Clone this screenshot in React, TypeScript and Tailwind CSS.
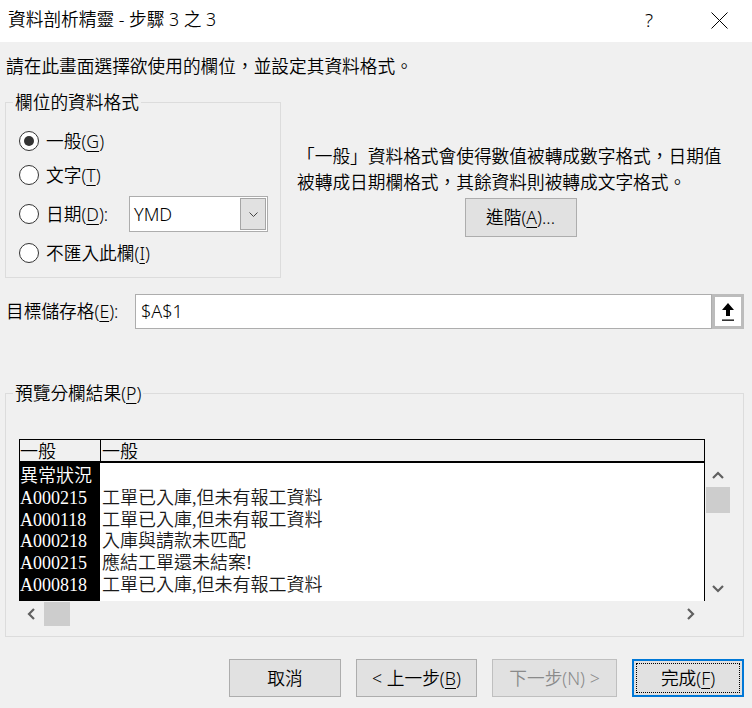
import React from 'react'

const rows: [string, string][] = [
  ['異常狀況', ''],
  ['A000215', '工單已入庫,但未有報工資料'],
  ['A000118', '工單已入庫,但未有報工資料'],
  ['A000218', '入庫與請款未匹配'],
  ['A000215', '應結工單還未結案!'],
  ['A000818', '工單已入庫,但未有報工資料'],
]

function Radio({ checked }: { checked?: boolean }) {
  return (
    <span className="flex h-[20px] w-[20px] shrink-0 items-center justify-center rounded-full border border-[#333] bg-white">
      {checked && <span className="h-[10px] w-[10px] rounded-full bg-[#333]" />}
    </span>
  )
}

function Key({ k }: { k: string }) {
  return <>(<span className="underline underline-offset-[3px]">{k}</span>)</>
}

function Chevron({ dir }: { dir: 'up' | 'down' | 'left' | 'right' }) {
  if (dir === 'up' || dir === 'down') {
    return (
      <svg width="12" height="8" viewBox="0 0 12 8">
        <polyline points={dir === 'up' ? '1,7 6,2 11,7' : '1,1 6,6 11,1'} fill="none" stroke="#606060" strokeWidth="2.2" />
      </svg>
    )
  }
  return (
    <svg width="8" height="12" viewBox="0 0 8 12">
      <polyline points={dir === 'left' ? '7,1 2,6 7,11' : '1,1 6,6 1,11'} fill="none" stroke="#606060" strokeWidth="2.2" />
    </svg>
  )
}

export default function App() {
  return (
    <div className="h-[708px] w-[752px] overflow-hidden bg-[#f0f0f0] font-['Noto_Sans','Noto_Sans_CJK_TC',sans-serif] text-[17.7px] font-[350] text-black">
      {/* 標題列 */}
      <div className="flex h-[42px] items-start bg-white">
        <div className="pl-[8px] pt-[8px] leading-[22px]">資料剖析精靈 - 步驟 3 之 3</div>
        <div className="ml-auto flex items-center pr-[24px] pt-[10px]">
          <span className="w-[14px] text-center text-[19px] font-light leading-[20px]">?</span>
          <svg className="ml-[55px]" width="17" height="17" viewBox="0 0 17 17">
            <line x1="0.5" y1="0.5" x2="16.5" y2="16.5" stroke="#000" strokeWidth="1" />
            <line x1="16.5" y1="0.5" x2="0.5" y2="16.5" stroke="#000" strokeWidth="1" />
          </svg>
        </div>
      </div>

      <div className="mt-[13px] pl-[6px] leading-[22px]">請在此畫面選擇欲使用的欄位，並設定其資料格式。</div>

      {/* 欄位的資料格式 */}
      <div className="mt-[14px] flex">
        <fieldset className="ml-[5px] w-[276px] border border-[#dcdcdc] pb-[7px] pl-[13px] pt-[11px]">
          <legend className="-ml-[6px] px-[2px] leading-[22px]">欄位的資料格式</legend>
          <div className="flex h-[34px] items-center gap-[7px]">
            <Radio checked />
            <span>一般<Key k="G" /></span>
          </div>
          <div className="flex h-[34px] items-center gap-[7px]">
            <Radio />
            <span>文字<Key k="T" /></span>
          </div>
          <div className="flex h-[44px] items-center gap-[7px]">
            <Radio />
            <span className="w-[76px]">日期<Key k="D" />:</span>
            <div className="flex h-[36px] w-[139px] items-center border border-[#adadad] bg-white pl-[4px]">
              <span className="text-[18px]">YMD</span>
              <span className="ml-auto mr-[1px] flex h-[32px] w-[26px] items-center justify-center border border-[#a5a5a5] bg-[#e1e1e1]">
                <svg width="9" height="5" viewBox="0 0 9 5">
                  <polyline points="0.5,0.5 4.5,4.5 8.5,0.5" fill="none" stroke="#444" strokeWidth="1" />
                </svg>
              </span>
            </div>
          </div>
          <div className="flex h-[34px] items-center gap-[7px]">
            <Radio />
            <span>不匯入此欄<Key k="I" /></span>
          </div>
        </fieldset>

        <div className="flex flex-1 flex-col pl-[16px] pr-[8px] pt-[52px]">
          <div className="leading-[26px]">
            <div>「一般」資料格式會使得數值被轉成數字格式，日期值</div>
            <div>被轉成日期欄格式，其餘資料則被轉成文字格式。</div>
          </div>
          <div className="mt-[3px] flex justify-center">
            <button className="h-[39px] w-[112px] border border-[#adadad] bg-[#e1e1e1]">進階<Key k="A" />...</button>
          </div>
        </div>
      </div>

      {/* 目標儲存格 */}
      <div className="mt-[16px] flex h-[35px] items-center pl-[6px] pr-[8px]">
        <span className="w-[129px]">目標儲存格<Key k="E" />:</span>
        <div className="flex h-full flex-1 items-center border border-[#adadad] bg-white pl-[5px] text-[18px]">$A$1</div>
        <div className="flex h-full w-[32px] items-center justify-center border-[3px] border-[#bcbcbc] bg-white">
          <svg width="12" height="18" viewBox="0 0 12 18">
            <path d="M6 0 L12 7 L8 7 L8 13 L4 13 L4 7 L0 7 Z" fill="#000" />
            <rect x="0" y="16.5" width="12" height="1.3" fill="#000" />
          </svg>
        </div>
      </div>

      {/* 預覽分欄結果 */}
      <fieldset className="ml-[5px] mt-[53px] w-[739px] border border-[#dcdcdc] pb-[9px] pl-[13px] pt-[35px]">
        <legend className="-ml-[6px] px-[2px] leading-[22px]">預覽分欄結果<Key k="P" /></legend>
        <div className="flex">
          <div className="w-[686px]">
            <div className="border-x border-t border-black font-['Liberation_Serif','Noto_Sans_CJK_TC',serif] text-[18px]">
              <div className="flex h-[23px] overflow-hidden border-b-2 border-black bg-[#f0f0f0] leading-[22px]">
                <div className="w-[81px] border-r border-black pt-[1px]">一般</div>
                <div className="pl-[1px] pt-[1px]">一般</div>
              </div>
              <div className="flex h-[138px] overflow-hidden bg-white leading-[21.8px]">
                <div className="w-[80px] bg-black pt-[3px] text-white">
                  {rows.map((r, i) => <div key={i}>{r[0]}</div>)}
                </div>
                <div className="flex-1 pl-[2px] pt-[3px] text-[#1a1a1a]">
                  {rows.map((r, i) => <div key={i} className="h-[21.8px]">{r[1]}</div>)}
                </div>
              </div>
            </div>
            <div className="flex h-[26px] items-center">
              <div className="flex h-[24px] w-[24px] items-center justify-center"><Chevron dir="left" /></div>
              <div className="ml-[1px] h-[24px] w-[26px] bg-[#cdcdcd]" />
              <div className="ml-auto mr-[2px] flex h-[24px] w-[24px] items-center justify-center"><Chevron dir="right" /></div>
            </div>
          </div>
          <div className="flex w-[26px] flex-col pt-[24px]">
            <div className="flex h-[138px] flex-col items-center">
              <div className="flex h-[24px] w-full items-center justify-center"><Chevron dir="up" /></div>
              <div className="h-[26px] w-[24px] bg-[#cdcdcd]" />
              <div className="mt-auto flex h-[24px] w-full items-center justify-center"><Chevron dir="down" /></div>
            </div>
          </div>
        </div>
      </fieldset>

      {/* 按鈕 */}
      <div className="mt-[22px] flex justify-end gap-[15px] pr-[8px]">
        <button className="h-[38px] w-[112px] border border-[#adadad] bg-[#e1e1e1]">取消</button>
        <button className="h-[38px] w-[121px] border border-[#adadad] bg-[#e1e1e1]">&lt; 上一步<Key k="B" /></button>
        <button className="h-[38px] w-[125px] border border-[#bfbfbf] bg-[#e1e1e1] text-[#8a8a8a]">下一步(N) &gt;</button>
        <button className="h-[38px] w-[112px] border-2 border-[#0078d7] bg-[#e1e1e1] p-[2px]">
          <span className="flex h-full w-full items-center justify-center border border-dotted border-black">完成<Key k="F" /></span>
        </button>
      </div>
    </div>
  )
}
